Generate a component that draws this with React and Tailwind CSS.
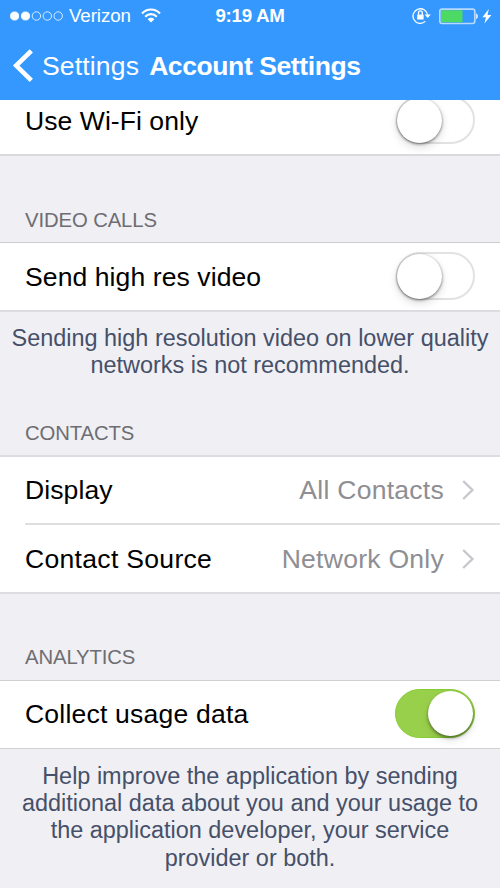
function StatusBar() {
  return (
    <div className="grid h-8 grid-cols-[1fr_auto_1fr] items-center pl-[10px] pr-[8px] text-[18.75px] leading-8">
      <div className="flex items-center">
        <svg width="54" height="12" viewBox="0 0 54 12" fill="none" stroke="#fff" strokeWidth="0.8">
          <circle cx="4.6" cy="6" r="4.1" fill="#fff" />
          <circle cx="15.5" cy="6" r="4.1" fill="#fff" />
          <circle cx="26.4" cy="6" r="4.2" />
          <circle cx="37.3" cy="6" r="4.2" />
          <circle cx="48.2" cy="6" r="4.2" />
        </svg>
        <span className="ml-[5px] tracking-[-0.1px]">Verizon</span>
        <svg className="-mt-[2px] ml-[10px]" width="20" height="15" viewBox="0 0 20 15" fill="none" stroke="#fff" strokeWidth="2.1">
          <path d="M1 5.4C6 0.2 14 0.2 19 5.4" />
          <path d="M4.2 8.7C7.5 5.3 12.5 5.3 15.8 8.7" />
          <path d="M10 14.5L6.7 11.2C8.5 9.4 11.5 9.4 13.3 11.2Z" fill="#fff" stroke="none" />
        </svg>
      </div>
      <span className="-ml-px mr-px font-bold tracking-[-0.3px]">9:19 AM</span>
      <div className="flex items-center justify-end">
        <svg width="19" height="18" viewBox="0 0 19 18" fill="none" stroke="#fff" strokeWidth="1.3">
          <path d="M15.6 8.6A7.3 7.3 0 1 0 13.3 14.4" />
          <path d="M12.6 7.5H18.8L15.7 11Z" fill="#fff" stroke="none" />
          <rect x="5.2" y="7.4" width="6.4" height="5" rx="0.5" fill="#fff" stroke="none" />
          <path d="M6.5 7.7V5.8A1.9 1.9 0 0 1 10.3 5.8V7.7" />
        </svg>
        <svg className="ml-[8px]" width="40" height="17" viewBox="0 0 40 17">
          <rect x="0.8" y="1.1" width="35" height="14.4" rx="2.2" fill="none" stroke="#b5d9ff" strokeWidth="1.7" />
          <rect x="2" y="2.3" width="21.5" height="12" rx="0.6" fill="#4cd964" />
          <path d="M37 5.5C39.6 6 39.6 10.6 37 11.1Z" fill="#cfe7ff" />
        </svg>
        <svg className="ml-[3px]" width="10" height="15" viewBox="0 0 10 15" fill="#fff">
          <path d="M6.8 0L0.4 8.2H4L2.4 14.6L9.4 6H5.5Z" />
        </svg>
      </div>
    </div>
  );
}

function NavBar() {
  return (
    <div className="flex h-[68px] items-center pl-[12px] text-[26.56px] leading-[68px]">
      <svg width="22" height="34" viewBox="0 0 22 34" fill="none" stroke="#fff" strokeWidth="4.6">
        <path d="M19.3 1.8L4.2 16.6L19.3 31.4" />
      </svg>
      <span className="ml-[8px] tracking-[0.15px]">Settings</span>
      <h1 className="ml-[10px] font-bold tracking-[-0.43px]">Account Settings</h1>
    </div>
  );
}

function Toggle({ on }) {
  return on ? (
    <div className="-mt-[2px] flex h-[49px] w-[80px] items-center justify-end rounded-full border border-[#86cb32] bg-[#99d04b] pr-[1px]">
      <div className="size-[45px] rounded-full bg-white shadow-[0_2px_3px_rgba(0,0,0,0.4),0_4px_9px_rgba(0,0,0,0.12)]" />
    </div>
  ) : (
    <div className="-mt-px flex h-[48px] w-[79px] items-center rounded-full border-2 border-[#e2e2e2] bg-white">
      <div className="-ml-[1px] size-[45px] shrink-0 rounded-full bg-white shadow-[0_1px_3px_rgba(0,0,0,0.55),0_4px_10px_rgba(0,0,0,0.14)]" />
    </div>
  );
}

function Row({ label, value, labelClass = "tracking-[0.08px]", height = "h-[67px]", children }) {
  return (
    <div className={`flex shrink-0 items-center bg-white pl-[25px] pr-[25px] text-[26.56px] leading-[67px] ${height}`}>
      <span className={`grow text-black ${labelClass}`}>{label}</span>
      {value && (
        <>
          <span className="tracking-[0.25px] text-[#8e8e93]">{value}</span>
          <svg className="-mt-px ml-[18px]" width="13" height="22" viewBox="0 0 13 22" fill="none" stroke="#c7c7cc" strokeWidth="2.4">
            <path d="M1.2 2L10.4 11L1.2 20" />
          </svg>
        </>
      )}
      {children}
    </div>
  );
}

function Heading({ children }) {
  return <h2 className="pl-[25px] text-[20.3px] leading-6 tracking-[-0.1px] text-[#6d6d72]">{children}</h2>;
}

export default function App() {
  return (
    <div className="flex h-[888px] w-[500px] flex-col overflow-hidden bg-[#efeff4] font-['Liberation_Sans',Arial,sans-serif]">
      <header className="h-[100px] shrink-0 bg-[#3498ff] text-white">
        <StatusBar />
        <NavBar />
      </header>

      <section className="flex h-[56px] shrink-0 flex-col justify-end overflow-hidden border-b-2 border-[#d9d9dd]">
        <Row label="Use Wi-Fi only" labelClass="tracking-[0.05px] pt-[2px]"><Toggle /></Row>
      </section>

      <section className="flex h-[156px] shrink-0 flex-col justify-end border-b-2 border-[#dcdce1]">
        <Heading>VIDEO CALLS</Heading>
        <div className="mt-[10px] border-t border-[#cdcdd1]">
          <Row label="Send high res video" labelClass="tracking-[0.08px] pt-[2px]"><Toggle /></Row>
        </div>
      </section>
      <p className="h-[109px] shrink-0 pt-[13px] text-center text-[23.44px] leading-[27.2px] text-[#465069]">
        Sending high resolution video on lower quality<br />networks is not recommended.
      </p>

      <section className="shrink-0">
        <Heading>CONTACTS</Heading>
        <div className="mt-[10px] border-y-2 border-[#dcdce2] bg-white">
          <Row label="Display" value="All Contacts" height="h-[66px]" />
          <div className="ml-[25px] h-[2px] bg-[#dfdfe2]" />
          <Row label="Contact Source" value="Network Only" labelClass="tracking-[0.3px]" height="h-[67px] pt-[2px]" />
        </div>
      </section>

      <section className="shrink-0 pt-[51px]">
        <Heading>ANALYTICS</Heading>
        <div className="mt-[11px] border-y border-[#cfcfd4]">
          <Row label="Collect usage data" labelClass="tracking-[0.2px]"><Toggle on /></Row>
        </div>
      </section>
      <p className="pt-[14px] text-center text-[23.44px] leading-[27.2px] text-[#465069]">
        Help improve the application by sending<br />additional data about you and your usage to<br />
        the application developer, your service<br />provider or both.
      </p>
    </div>
  );
}
